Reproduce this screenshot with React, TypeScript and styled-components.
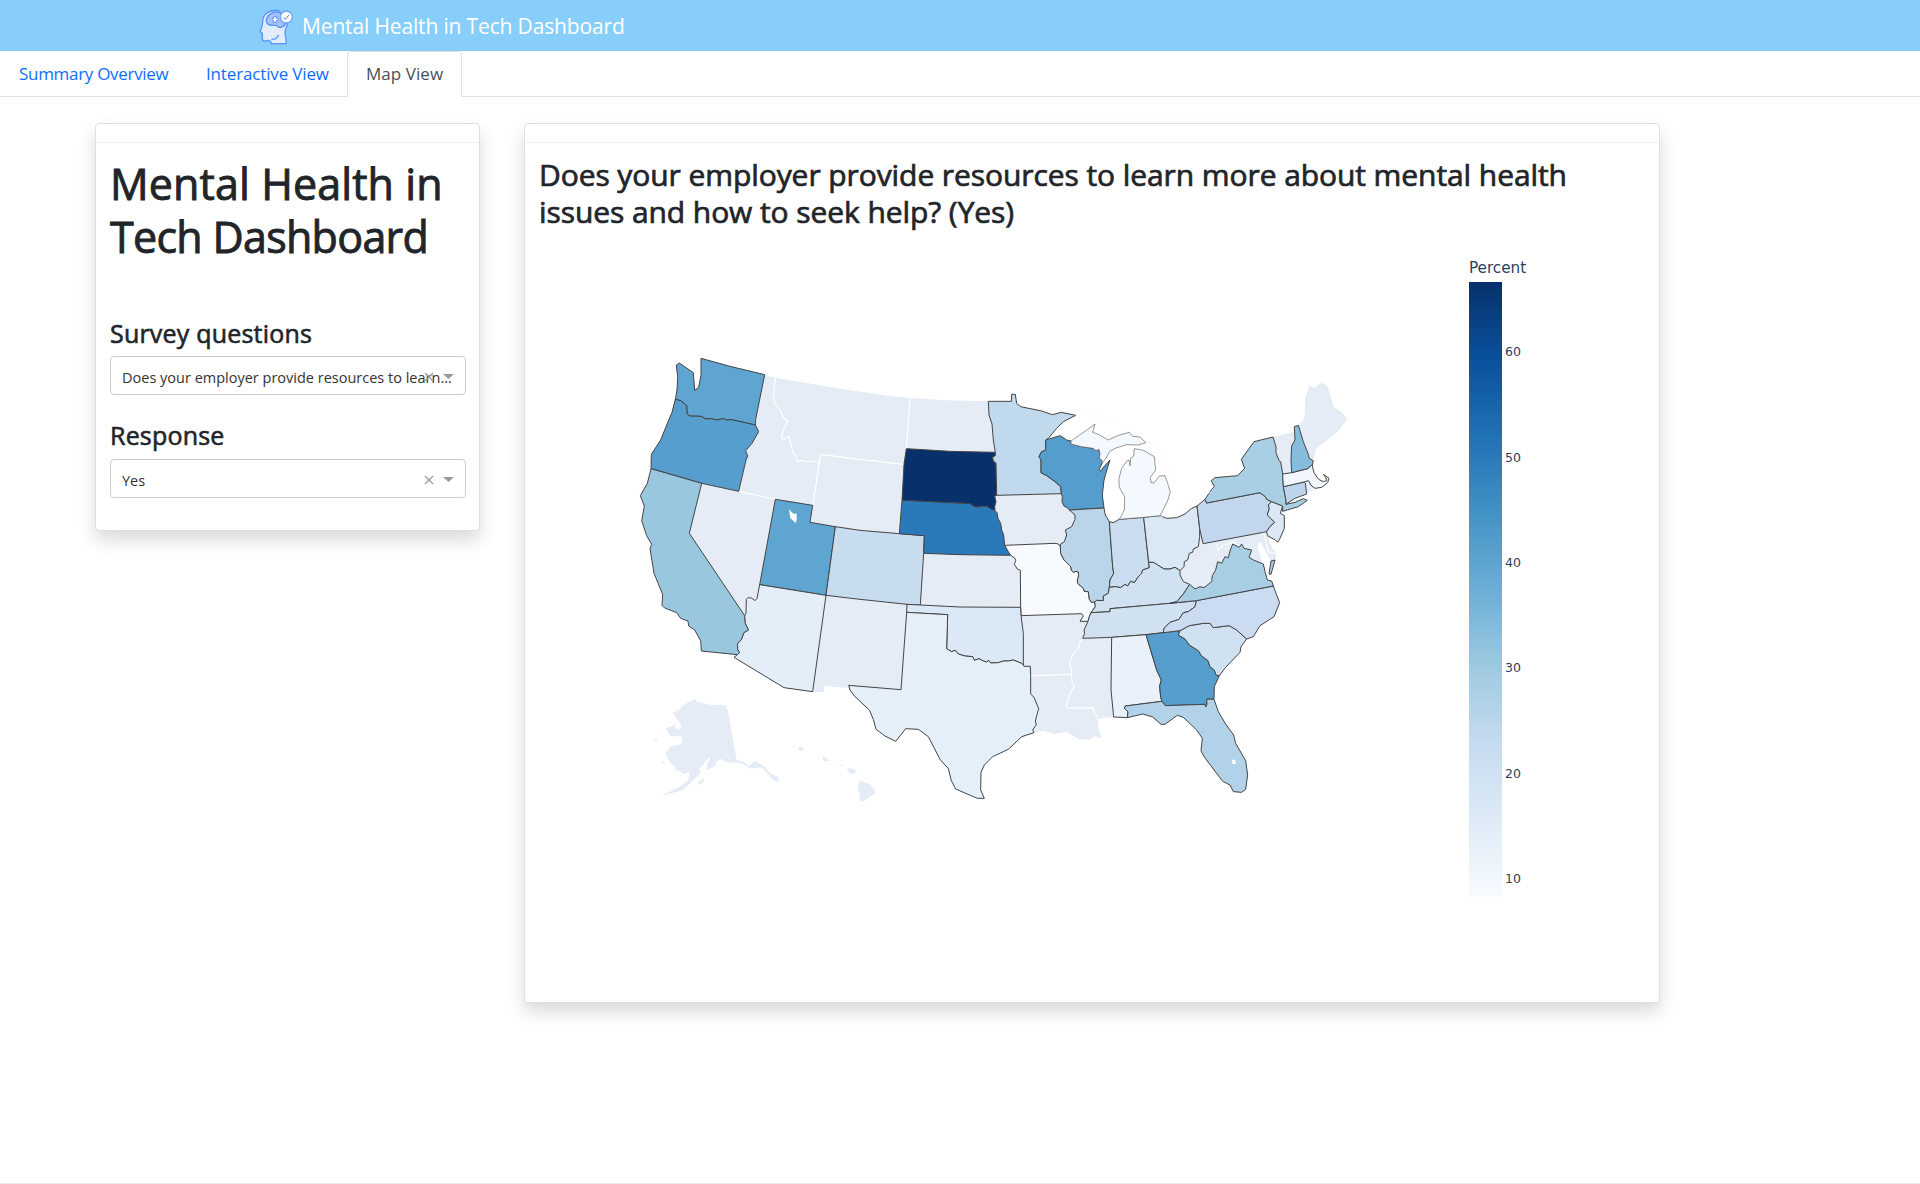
import React from "react";
import styled, { createGlobalStyle } from "styled-components";

const sans = '"Open Sans", "Noto Sans", sans-serif';

const GlobalStyle = createGlobalStyle`
  *, *::before, *::after { box-sizing: border-box; }
  html, body { margin: 0; padding: 0; background: #fff; }
  body { font-family: ${sans}; color: #212529; overflow: hidden; }
  h1, h3, h4, p { margin: 0; }
`;

const Page = styled.div`
  display: flex;
  flex-direction: column;
  height: 1184px;
  border-bottom: 1px solid #ececec;
`;

const Navbar = styled.header`
  display: flex;
  align-items: center;
  height: 51px;
  padding-left: 252px;
  background: #87cefa;
`;

const BrandName = styled.span`
  color: #fff;
  font-size: 21px;
  line-height: 30px;
  white-space: nowrap;
  letter-spacing: -0.15px;
`;

const Tabs = styled.nav`
  display: flex;
  height: 46px;
  border-bottom: 1px solid #dee2e6;
`;

const Tab = styled.a<{ $active?: boolean; $width: number; $tracking: number }>`
  width: ${(p) => p.$width}px;
  height: 46px;
  padding: 9px 0 0 18px;
  border: 1px solid;
  border-color: ${(p) => (p.$active ? "#dee2e6 #dee2e6 #fff" : "transparent")};
  border-radius: 4px 4px 0 0;
  color: ${(p) => (p.$active ? "#495057" : "#0d6efd")};
  font-size: 17px;
  line-height: 26px;
  letter-spacing: ${(p) => p.$tracking}px;
  white-space: nowrap;
`;

const Content = styled.main`
  display: flex;
  align-items: flex-start;
  gap: 44px;
  padding: 26px 0 0 95px;
`;

const Card = styled.section<{ $width: number; $height: number }>`
  width: ${(p) => p.$width}px;
  height: ${(p) => p.$height}px;
  flex: none;
  border: 1px solid #dfdfdf;
  border-radius: 4px;
  background: #fff;
  box-shadow: 0 9px 18px rgba(0, 0, 0, 0.15);
`;

const CardHeader = styled.div`
  height: 19px;
  border-bottom: 1px solid #efefef;
`;

const CardBody = styled.div`
  display: flex;
  flex-direction: column;
  padding: 14px 13px 0 14px;
`;

const Title = styled.h1`
  font-size: 43px;
  font-weight: 400;
  line-height: 53px;
  white-space: nowrap;
  -webkit-text-stroke: 0.9px #212529;
`;

const TitleLine = styled.span<{ $tracking: number }>`
  display: block;
  height: 53px;
  letter-spacing: ${(p) => p.$tracking}px;
`;

const FieldLabel = styled.h4<{ $top: number }>`
  margin-top: ${(p) => p.$top}px;
  font-size: 25px;
  font-weight: 400;
  line-height: 32px;
  letter-spacing: 0.2px;
  white-space: nowrap;
  -webkit-text-stroke: 0.6px #212529;
`;

const Select = styled.div<{ $top: number }>`
  display: flex;
  align-items: center;
  height: 39px;
  margin-top: ${(p) => p.$top}px;
  padding: 0 11px;
  border: 1px solid #ccc;
  border-radius: 4px;
  background: #fff;
`;

const SelectValue = styled.span`
  flex: 1;
  min-width: 0;
  margin-top: 4px;
  color: #333;
  font-size: 14.5px;
  line-height: 22px;
  white-space: nowrap;
`;

const SelectIcons = styled.svg`
  flex: none;
  width: 30px;
  height: 14px;
  margin-top: 2px;
`;

const Question = styled.h3`
  margin-top: -1px;
  font-size: 30px;
  font-weight: 400;
  line-height: 37px;
  letter-spacing: -0.08px;
  white-space: nowrap;
  -webkit-text-stroke: 0.7px #212529;
`;

const Figure = styled.div`
  display: flex;
  margin-top: 11px;
`;

const MapArea = styled.svg`
  flex: none;
  width: 760px;
  height: 480px;
  margin: 99px 0 0 91px;
`;

const Legend = styled.div`
  display: flex;
  flex-direction: column;
  margin: 17px 0 0 79px;
  color: #2a3f5f;
  font-family: "DejaVu Sans", Verdana, sans-serif;
`;

const LegendTitle = styled.div`
  height: 24px;
  padding-top: 1px;
  font-size: 15.2px;
  line-height: 18px;
`;

const LegendScale = styled.div`
  display: flex;
  gap: 3px;
  height: 615px;
`;

const LegendBar = styled.div`
  width: 33px;
  background: linear-gradient(
    to top,
    rgb(247, 251, 255), rgb(222, 235, 247), rgb(198, 219, 239),
    rgb(158, 202, 225), rgb(107, 174, 214), rgb(66, 146, 198),
    rgb(33, 113, 181), rgb(8, 81, 156), rgb(8, 48, 107)
  );
`;

const LegendTicks = styled.div`
  display: grid;
  grid-auto-rows: 105.4px;
  padding-top: 61.3px;
  font-size: 12.5px;
`;

const LegendTick = styled.span`
  align-self: start;
  line-height: 18px;
`;

/* Boundary segments shared by neighbouring states, in map units. */
const arcs: Record<string, string> = {
  waCoast: "136,178 141,150 143,110 139,75 148,69 190,98 194,151 206,142 213,105 213,55 300,79 404,104",
  waId: "404,104 377,238 376,255",
  waOr: "136,178 152,182 170,197 171,220 178,228 213,229 228,237 245,236 260,240 280,236 290,240 305,239 345,248 376,255",
  orCoast: "136,178 126,217 108,260 92,300 64,343 63,386",
  orId: "376,255 386,275 366,310 347,332 353,348 348,360 326,454",
  orCa: "63,386 215,430",
  orNv: "215,430 326,454",
  caCoast: "63,386 52,430 31,467 43,498 35,542 50,587 65,613 60,625 72,700 98,763 96,796 104,804 140,818 152,835 174,843 176,858 194,870 212,902 214,933 322,944",
  caNv: "215,430 178,580 344,827",
  caAz: "344,827 346,850 356,870 342,878 334,900 323,910 323,928 329,938 322,944",
  azSouth: "322,944 312,952 462,1043 548,1055",
  azNm: "548,1055 588,766",
  azUt: "588,766 389,734",
  azNv: "389,734 381,775 375,782 365,774 354,773 349,778 348,820 344,827",
  utNv: "389,734 436,478",
  utId: "436,478 548,496",
  utWy: "548,496 540,547 616,560",
  utCo: "616,560 588,766",
  idNv: "326,454 436,478",
  idWy: "548,496 568,370",
  mtWyW: "568,370 571,343",
  mtId: "437,113 430,165 435,190 450,210 462,235 473,243 460,270 455,295 460,299 475,290 480,300 485,322 490,340 498,345 502,366 515,362 535,366 550,362 565,368 568,370",
  mtWy: "571,343 690,358 822,373",
  idNorth: "404,104 437,113",
  mtNorth: "437,113 640,148 780,168 840,174",
  ndNorth: "840,174 950,181 1075,184",
  mtNd: "840,174 829,326",
  mtSd: "829,326 822,373",
  sdWy: "822,373 816,481",
  wyNe: "816,481 808,581",
  wyCo: "616,560 690,571 808,581",
  coNe: "808,581 883,587 881,640",
  coKs: "881,640 871,795",
  coNm: "588,766 690,778 831,793",
  coOk: "831,793 871,795",
  nmOk: "831,793 830,817",
  okTx: "830,817 953,824 950,926 965,935 976,931 985,942 1005,948 1028,950 1033,961 1047,956 1060,963 1070,966 1076,961 1082,969 1105,968 1120,963 1135,963 1150,960 1165,966 1175,970 1180,975",
  neSd: "816,481 1020,491 1030,498 1040,501 1055,499 1070,499 1083,507 1095,512",
  sdNd: "829,326 960,334 1095,337",
  ndMn: "1075,184 1077,225 1086,252 1090,300 1096,337",
  sdMn: "1096,337 1096,347 1088,352 1090,362 1098,370 1100,466",
  sdIa: "1100,466 1094,468 1098,485 1094,500 1095,512",
  neIa: "1095,512 1101,518 1104,535 1112,550 1115,570 1121,585 1124,616",
  neMo: "1124,616 1135,635 1142,646",
  neKs: "881,640 990,644 1142,646",
  ksMo: "1142,646 1155,655 1157,662 1153,673 1162,687 1171,691 1172,802",
  ksOk: "871,795 990,801 1172,802",
  okMo: "1172,802 1173,827",
  okAr: "1173,827 1180,880 1180,975",
  txAr: "1180,975 1182,979 1201,979 1202,1007",
  txLa: "1202,1007 1202,1062 1212,1072 1226,1106 1222,1120 1216,1143 1219,1154 1208,1170 1212,1178",
  txCoast: "1212,1178 1175,1190 1135,1228 1088,1250 1063,1275 1053,1297 1052,1350 1063,1375 1042,1375 977,1347 964,1322 955,1286 930,1258 895,1190 865,1168 827,1166 797,1204 765,1188 738,1168 730,1138 718,1110 675,1070 660,1050 656,1036",
  txNm: "656,1036 813,1049 830,817",
  nmSouth: "548,1055 582,1057 583,1038 656,1044 656,1036",
  moIa: "1124,616 1275,610 1285,612 1291,620",
  moIl: "1291,620 1292,640 1302,660 1322,680 1324,690 1330,697 1337,694 1345,696 1346,708 1342,720 1343,730 1360,745 1363,754 1375,755 1378,778 1385,787 1394,786",
  moKy: "1394,786 1396,800 1383,818",
  moTn: "1383,818 1378,830 1374,844",
  moAr: "1374,844 1350,844 1360,828 1355,821 1173,827",
  arTn: "1374,844 1362,870 1364,880 1358,895",
  msTn: "1358,895 1445,892",
  alTn: "1445,892 1548,884",
  arMs: "1358,895 1350,905 1345,928 1330,940 1318,970 1324,990 1324,1003",
  arLa: "1202,1007 1324,1003",
  laMs: "1324,1003 1326,1025 1333,1040 1320,1060 1315,1080 1307,1100 1312,1105 1390,1103 1392,1120 1403,1130 1403,1140",
  laCoast: "1403,1140 1407,1172 1415,1188 1410,1194 1395,1188 1378,1199 1350,1198 1345,1197 1310,1176 1270,1182 1240,1172 1212,1178",
  msCoast: "1403,1140 1415,1135 1451,1131",
  msAl: "1445,892 1443,1050 1451,1131",
  alSouth: "1451,1131 1492,1133",
  alFl: "1492,1133 1494,1115 1483,1105 1486,1098 1596,1084",
  alGa: "1548,884 1580,990 1594,1020 1589,1038 1592,1072 1596,1084",
  gaFl: "1596,1084 1606,1097 1724,1093 1727,1101 1731,1092 1730,1077 1752,1078",
  gaCoast: "1752,1078 1753,1040 1768,1007",
  gaSc: "1768,1007 1758,1005 1753,990 1740,980 1734,962 1715,948 1705,932 1678,915 1666,898 1645,885 1650,872",
  gaTn: "1548,884 1600,878",
  gaNc: "1600,878 1650,872",
  flCoast: "1752,1078 1765,1115 1787,1152 1811,1185 1817,1210 1847,1262 1853,1305 1847,1348 1835,1357 1810,1355 1800,1335 1778,1324 1722,1250 1713,1232 1717,1195 1700,1170 1660,1132 1642,1126 1605,1153 1593,1153 1568,1131 1538,1122 1492,1133",
  scNc: "1650,872 1678,857 1720,850 1740,850 1750,863 1797,857 1820,870 1850,897",
  scCoast: "1850,897 1833,920 1830,937 1787,982 1768,1007",
  ncCoast: "1850,897 1870,890 1890,857 1932,830 1949,788 1938,760 1930,738",
  ncTn: "1600,878 1602,865 1620,847 1633,843 1647,838 1660,818 1675,815 1695,800 1699,782",
  ncVa: "1699,782 1930,738",
  tnVa: "1699,782 1620,790",
  tnKy: "1620,790 1440,806 1440,815 1383,818",
  kyVa: "1620,790 1640,785 1660,762 1679,733",
  kyWv: "1679,733 1660,725 1650,705 1650,692",
  kyOh: "1650,692 1635,682 1620,687 1602,687 1580,673 1570,667 1556,667",
  kyIn: "1556,667 1558,683 1538,690 1535,700 1525,710 1513,728 1502,724 1493,738 1485,733 1472,743 1457,740 1438,742",
  kyIl: "1438,742 1435,760 1420,768 1420,782 1400,781 1394,786",
  ilIn: "1438,545 1448,680 1451,700 1440,720 1438,742",
  inOh: "1541,532 1556,667",
  inNorth: "1438,545 1450,548 1468,538 1541,532",
  ohNorth: "1541,532 1590,527 1610,535 1640,533 1665,522 1685,505 1701,498",
  ohPa: "1701,498 1709,565",
  paWv: "1709,565 1719,611",
  ohWv: "1709,565 1709,590 1705,620 1690,627 1688,637 1678,640 1673,660 1663,665 1662,680 1650,692",
  ilWi: "1318,510 1422,504",
  ilLake: "1422,504 1426,525 1438,545",
  ilIa: "1318,510 1335,525 1335,538 1325,560 1306,570 1310,585 1303,605 1292,612 1291,620",
  iaWi: "1294,461 1297,470 1296,485 1302,498 1315,505 1318,510",
  iaMn: "1100,466 1294,461",
  mnWi: "1294,461 1292,440 1275,425 1250,407 1233,398 1233,360 1227,350 1235,335 1247,330 1247,300",
  mnNorth: "1247,300 1255,295 1280,265 1300,245 1337,226 1294,217 1267,224 1235,213 1172,200 1160,190 1156,163 1145,163 1144,184 1075,184",
  wiNorth: "1247,300 1290,287 1310,300 1323,303",
  wiMi: "1323,303 1323,312 1355,320 1390,325 1398,332 1407,328 1410,340 1408,355 1415,360 1417,368",
  wiEast: "1417,368 1408,388 1412,394 1420,382 1440,360 1432,385 1422,420 1417,465 1422,504",
  miUpper: "1323,303 1386,259 1395,252 1388,277 1405,283 1435,300 1465,286 1498,277 1508,289 1530,291 1547,308 1525,315 1490,314 1455,325 1438,335 1428,355 1417,368",
  miLower: "1468,538 1483,510 1484,470 1467,440 1467,415 1475,385 1490,363 1497,360 1500,377 1502,355 1511,348 1513,326 1540,331 1573,350 1577,390 1561,412 1563,428 1572,429 1588,408 1605,407 1613,430 1621,457 1612,485 1590,527 1541,532 1468,538",
  paLake: "1701,498 1725,478",
  paNy: "1725,478 1730,489 1890,458 1906,470 1910,478 1925,485",
  paNj: "1925,485 1915,495 1918,505 1912,525 1934,547 1920,560 1910,575",
  paMd: "1910,575 1900,577 1719,611",
  njCoast: "1925,485 1958,498 1951,520 1963,527 1963,565 1950,595 1943,607 1936,600 1912,587 1910,575",
  nyNorth: "1725,478 1745,448 1753,440 1744,422 1755,413 1823,407 1844,385 1834,358 1872,305 1929,291",
  nyVt: "1929,291 1938,320 1938,338 1947,362 1952,365 1958,402",
  nyMa: "1958,402 1960,440",
  nyCt: "1960,440 1968,482 1968,493",
  nyNj: "1968,493 1995,487 2020,476 2032,481 2005,500 1958,514 1958,498 1925,485",
  maNorth: "1958,402 1985,398",
  maNh: "1985,398 2033,386 2047,374",
  maCoast: "2047,374 2048,383 2053,400 2066,418 2080,425 2090,422 2087,412 2080,403 2097,415 2093,428 2075,442 2055,445 2045,438 2035,422 2022,426",
  maCt: "2022,426 1960,440",
  ctCoast: "2022,426 2026,430 2030,462 1995,475 1968,493",
  nhVt: "1993,260 1995,300 1985,318 1983,360 1985,398",
  nhMe: "1993,260 2005,256 2020,305 2037,348 2037,354 2050,362 2047,374",
  vaWv: "1679,733 1695,747 1710,740 1722,743 1745,725 1747,707 1757,690 1763,665 1775,670 1785,650 1795,653 1800,633 1808,612 1828,622",
  vaMd: "1828,622 1835,612 1842,625 1865,630 1857,652 1870,660 1900,672",
  vaCoast: "1900,672 1905,695 1912,720 1925,723 1930,738",
};

/* A leading minus walks the segment backwards. */
const trace = (names: string) =>
  "M" +
  names
    .split(" ")
    .map((name) =>
      name[0] === "-" ? arcs[name.slice(1)].split(" ").reverse().join(" ") : arcs[name]
    )
    .join(" ") +
  "Z";

const noData = [
  "waId orId idNv utId idWy -mtId -idNorth",
  "mtNorth mtNd mtSd -mtWy -mtWyW -mtId",
  "ndNorth ndMn -sdNd -mtNd",
  "mtWy sdWy wyNe -wyCo -utWy idWy mtWyW",
  "orNv idNv -utNv azNv -caNv",
  "azNm coNm nmOk -txNm -nmSouth",
  "neKs ksMo -ksOk -coKs",
  "iaMn iaWi ilIa -moIa -neIa -sdIa",
  "okAr txAr arLa -arMs -arTn moAr",
  "arLa laMs laCoast -txLa",
  "arMs laMs msCoast -msAl -msTn",
  "kyWv -ohWv paWv -vaWv",
];

const states: [string, string, string][] = [
  ["WA", "#5fa5d1", "waCoast waId -waOr"],
  ["OR", "#569ecd", "orCoast orCa orNv -orId -waOr"],
  ["CA", "#9ac7e0", "caCoast -caAz -caNv -orCa"],
  ["UT", "#5fa5d1", "utNv utId utWy utCo azUt"],
  ["AZ", "#e3eef8", "caAz azSouth azNm azUt azNv"],
  ["CO", "#c8dcf0", "wyCo coNe coKs -coOk -coNm -utCo"],
  ["SD", "#08306b", "sdNd sdMn sdIa -neSd -sdWy -mtSd"],
  ["NE", "#2a79b9", "neSd neIa neMo -neKs -coNe -wyNe"],
  ["MN", "#c1d9ed", "-mnNorth -mnWi -iaMn -sdMn -ndMn"],
  ["WI", "#549dcc", "wiNorth wiMi wiEast -ilWi -iaWi mnWi"],
  ["MO", "#f7fbff", "moIa moIl moKy moTn moAr -okMo -ksMo -neMo"],
  ["OK", "#dbe8f5", "coOk ksOk okMo okAr -okTx -nmOk"],
  ["TX", "#e4eff9", "okTx txAr txLa txCoast txNm"],
  ["IL", "#bad5ea", "ilWi ilLake ilIn kyIl -moIl -ilIa"],
  ["IN", "#c9dcf0", "inNorth inOh kyIn -ilIn"],
  ["OH", "#dae8f5", "ohNorth ohPa ohWv kyOh -inOh"],
  ["KY", "#d0e1f1", "-kyIl -kyIn -kyOh -kyWv -kyVa tnKy -moKy"],
  ["TN", "#d0e1f1", "-tnKy -tnVa -ncTn -gaTn -alTn -msTn -arTn -moTn"],
  ["AL", "#e9f2fb", "alTn alGa -alFl -alSouth -msAl"],
  ["GA", "#569ecd", "gaTn gaNc -gaSc -gaCoast -gaFl -alGa"],
  ["FL", "#b1d2e9", "alFl gaFl flCoast"],
  ["SC", "#d0e1f1", "scNc scCoast gaSc"],
  ["NC", "#cbdcf2", "ncVa -ncCoast -scNc -gaNc ncTn"],
  ["VA", "#a8cee4", "vaWv vaMd vaCoast -ncVa tnVa kyVa"],
  ["PA", "#c2d7ee", "paLake paNy paNj paMd -paWv -ohPa"],
  ["NJ", "#dbe8f5", "njCoast -paNj"],
  ["NY", "#a9cfe4", "nyNorth nyVt nyMa nyCt nyNj -paNy"],
  ["CT", "#bdd5ec", "-maCt ctCoast -nyCt"],
  ["MA", "#f0f5fe", "maNorth maNh maCoast maCt -nyMa"],
  ["NH", "#87bddc", "nhMe -maNh -nhVt"],
];

const UsMap = () => (
  <MapArea viewBox="0 0 2280 1440">
    <g fill="#e5ecf6" stroke="none">
      {noData.map((d) => (
        <path key={d} d={trace(d)} />
      ))}
      <path d="M1719,611 1900,577 1912,590 1925,620 1940,638 1935,660 1923,664 1910,640 1893,608 1885,608 1883,625 1893,655 1897,668 1870,660 1857,652 1865,630 1842,625 1835,612 1828,622 1808,612 1800,633 1740,650Z" />
      <path d="M1929,291 1993,275 1995,300 1985,318 1985,398 1958,402Z" />
      <path d="M2005,256 2019,242 2025,220 2025,175 2039,135 2053,144 2075,128 2092,138 2111,200 2135,217 2152,238 2125,273 2058,327 2050,360 2030,330Z" />
      <path d="M2022,426 2035,422 2047,440 2049,450 2030,460Z" />
      <g transform="translate(30 900)">
        <path d="M165,177 172,186 210,194 258,196 262,205 290,360 310,366 330,378 343,362 368,375 395,403 414,410 417,425 400,420 365,382 332,386 305,370 262,366 242,357 228,366 226,378 202,390 200,372 211,356 207,353 190,372 178,385 182,398 160,420 130,450 110,455 70,467 68,464 115,443 145,420 150,396 130,402 120,394 108,392 105,376 90,370 78,345 80,335 95,318 125,312 126,290 90,287 78,265 105,255 108,266 125,266 118,245 97,218 115,212 130,195 150,184Z" />
        <path d="M173,427 190,416 193,423 180,434Z M62,363 73,367 68,371Z M40,297 48,298 58,307 47,302Z" />
        <path d="M473,325 482,320 490,322 489,332 480,333Z M546,352 553,347 570,364 552,364Z M590,373 613,375 608,378Z M620,384 640,387 650,395 640,402 628,398Z M659,422 690,433 708,457 668,486 658,480 660,462 652,450Z" />
      </g>
    </g>
    <g fill="none" stroke="#fff" strokeWidth="3.5" strokeLinejoin="round">
      {["mtId", "idWy", "mtWyW", "mtWy", "mtNd", "idNv", "arMs", "arLa", "laMs"].map((n) => (
        <polyline key={n} points={arcs[n]} />
      ))}
      <polyline points="1760,610 1765,632 1780,615 1795,612 1810,605 1826,620" />
      <polyline points="1902,580 1914,635 1940,641" />
    </g>
    <g stroke="#444" strokeWidth="3" strokeLinejoin="round">
      {states.map(([id, fill, d]) => (
        <path key={id} fill={fill} d={trace(d)} />
      ))}
      <path fill="#a8cee4" d="M1923,663 1935,660 1923,703 1917,702Z" />
    </g>
    <g fill="#f3f9fe" stroke="#666" strokeWidth="2" strokeLinejoin="round">
      <path d={trace("miUpper -wiMi")} />
      <path d={trace("miLower")} />
    </g>
    <g fill="#fff">
      <path d="M477,508 487,518 494,522 500,520 500,540 497,549 481,535Z" />
      <path d="M1806,1259H1816L1818,1272H1807Z" />
    </g>
    <g fill="none" stroke="#f5f5f5" strokeWidth="1.5">
      <polyline points="1337,226 1379,211 1500,268 1600,338 1629,425" />
      <polyline points="1590,530 1640,520 1690,485 1743,455" />
    </g>
  </MapArea>
);

const Logo = () => (
  <svg width="50" height="46" viewBox="0 0 150 138">
    <path
      d="M78,22C50,20 32,34 32,58C32,70 27,78 24,86L31,91V108Q31,114 38,114L50,112L57,117V122H102V105Q94,88 106,66V50Z"
      fill="#e3ecff" stroke="#5b95f9" strokeWidth="4" strokeLinejoin="round"
    />
    <path
      d="M84,28C66,24 45,32 43,52Q44,64 54,66Q60,68 74,67Q82,78 92,71Q101,67 101,56L98,42Z"
      fill="#a4c2f9" stroke="#5b95f9" strokeWidth="4"
    />
    <path d="M69,40v19M60,49.500h19" stroke="#5b95f9" strokeWidth="11" />
    <path d="M69,42v15M62,49.500h15" stroke="#fff" strokeWidth="5" />
    <circle cx="103" cy="42" r="18" fill="#fff" stroke="#6ea3fa" strokeWidth="4" />
    <path d="M95,43l5,6 11,-13" fill="none" stroke="#4a86e8" strokeWidth="3" />
    <path d="M58,110l14,-3 8,-11" fill="none" stroke="#5b95f9" strokeWidth="4" />
  </svg>
);

const Controls = () => (
  <SelectIcons viewBox="0 0 30 14">
    <path d="M1 3l8 8M9 3l-8 8" stroke="#999" strokeWidth="1.200" />
    <path d="M19 4h11l-5.500 5z" fill="#999" />
  </SelectIcons>
);

const ticks = [60, 50, 40, 30, 20, 10];

export default function App() {
  return (
    <>
      <GlobalStyle />
      <Page>
        <Navbar>
          <Logo />
          <BrandName>Mental Health in Tech Dashboard</BrandName>
        </Navbar>
        <Tabs>
          <Tab $width={187} $tracking={-0.3}>Summary Overview</Tab>
          <Tab $width={160} $tracking={-0.15}>Interactive View</Tab>
          <Tab $width={115} $tracking={0.05} $active>Map View</Tab>
        </Tabs>
        <Content>
          <Card $width={385} $height={408}>
            <CardHeader />
            <CardBody>
              <Title>
                <TitleLine $tracking={0.1}>Mental Health in</TitleLine>
                <TitleLine $tracking={-0.7}>Tech Dashboard</TitleLine>
              </Title>
              <FieldLabel $top={54}>Survey questions</FieldLabel>
              <Select $top={7}>
                <SelectValue>Does your employer provide resources to learn...</SelectValue>
                <Controls />
              </Select>
              <FieldLabel $top={24}>Response</FieldLabel>
              <Select $top={8}>
                <SelectValue>Yes</SelectValue>
                <Controls />
              </Select>
            </CardBody>
          </Card>
          <Card $width={1136} $height={880}>
            <CardHeader />
            <CardBody>
              <Question>
                Does your employer provide resources to learn more about mental health
                <br />
                issues and how to seek help? (Yes)
              </Question>
              <Figure>
                <UsMap />
                <Legend>
                  <LegendTitle>Percent</LegendTitle>
                  <LegendScale>
                    <LegendBar />
                    <LegendTicks>
                      {ticks.map((t) => (
                        <LegendTick key={t}>{t}</LegendTick>
                      ))}
                    </LegendTicks>
                  </LegendScale>
                </Legend>
              </Figure>
            </CardBody>
          </Card>
        </Content>
      </Page>
    </>
  );
}
